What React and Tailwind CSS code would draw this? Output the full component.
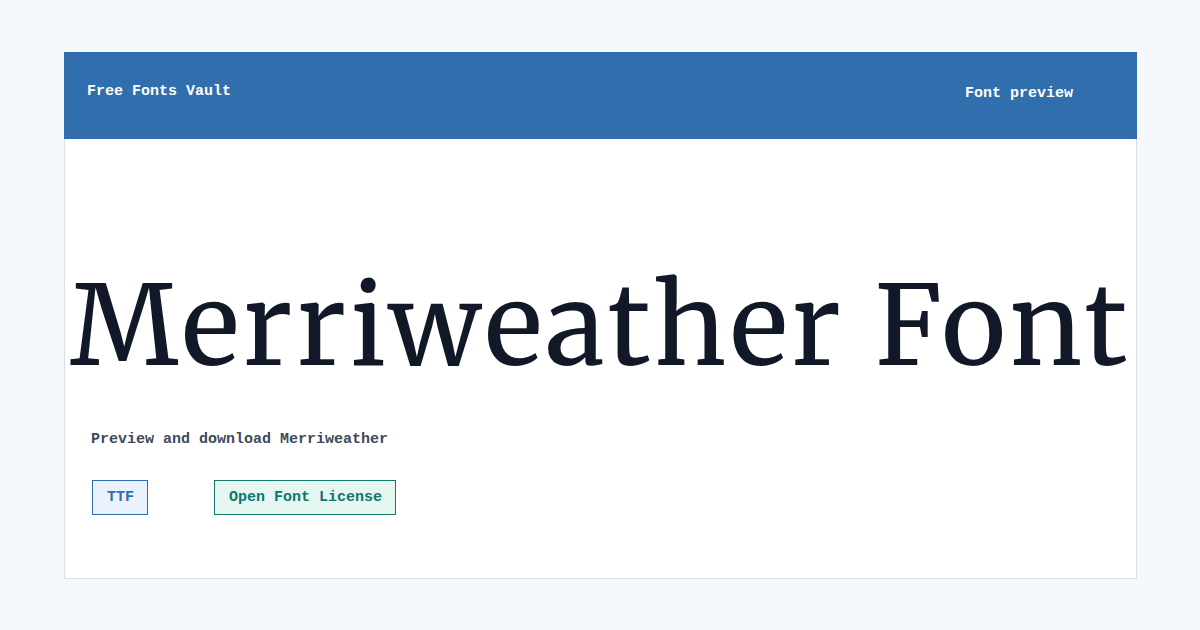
import React from 'react';

const mono = { fontFamily: '"Liberation Mono", "DejaVu Sans Mono", monospace' };

const Badge = ({ children, className }) => (
    <span
        className={`inline-flex items-center h-[35px] pl-[14px] pr-[13px] border text-[15px] leading-[20px] font-bold ${className}`}
        style={mono}
    >
        {children}
    </span>
);

export default function App() {
    return (
        <div className="w-[1200px] h-[630px] bg-[#f5f9fe] pt-[52px] pl-[64px]">
            <div className="w-[1073px] h-[527px] bg-white border border-[#d8e0ea] border-t-0 flex flex-col">
                <header className="h-[87px] bg-[#306ead] flex items-start justify-between text-white text-[15px] leading-[20px] font-bold -mx-px" style={mono}>
                    <span className="pl-[23px] pt-[30px]">Free Fonts Vault</span>
                    <span className="pr-[64px] pt-[32px]">Font preview</span>
                </header>
                <div className="flex-1 flex flex-col">
                    <h1
                        className="mt-[132px] text-center text-[#111827] text-[110px] leading-none tracking-[0.035em] whitespace-nowrap"
                        style={{ fontFamily: '"Merriweather", "DejaVu Serif", serif' }}
                    >
                        Merriweather Font
                    </h1>
                    <p className="mt-[49px] pl-[26px] text-[15px] leading-[20px] text-[#3e4a5c] font-bold" style={mono}>
                        Preview and download Merriweather
                    </p>
                    <div className="mt-[30px] pl-[27px] flex gap-[66px]">
                        <Badge className="bg-[#eaf2fd] border-[#2f6fb0] text-[#2f6fb0]">TTF</Badge>
                        <Badge className="bg-[#e6f6f1] border-[#0f7a6a] text-[#0f766e]">Open Font License</Badge>
                    </div>
                </div>
            </div>
        </div>
    );
}
